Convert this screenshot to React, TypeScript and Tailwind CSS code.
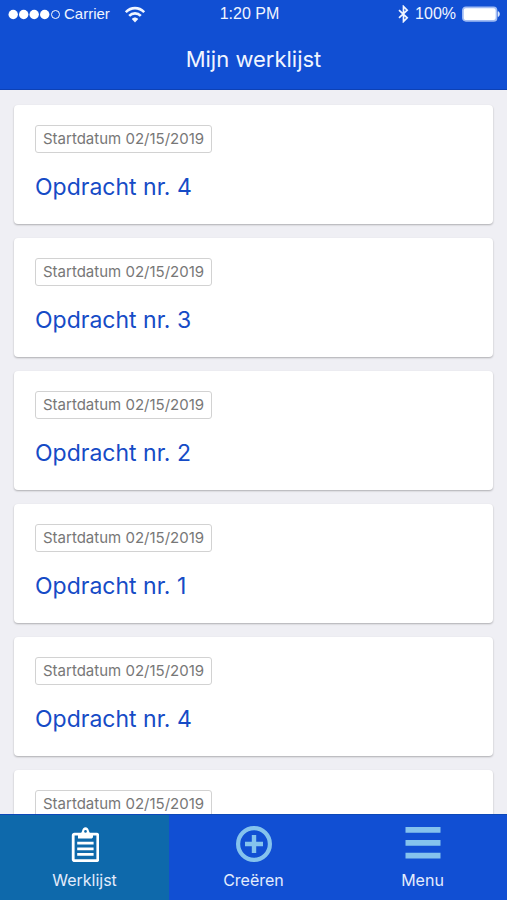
import type { ReactNode } from 'react';

type Task = { id: number; title: string; startDate: string };

const tasks: Task[] = [4, 3, 2, 1, 4, 3].map((nr, index) => ({
  id: index,
  title: `Opdracht nr. ${nr}`,
  startDate: '02/15/2019',
}));

function WifiIcon() {
  return (
    <svg className="h-[17px] w-5" viewBox="0 0 20 17" fill="none" stroke="currentColor" strokeWidth="2.6" aria-hidden="true">
      <path d="M0.8 6.200C6 0.800 14 0.800 19.200 6.200" />
      <path d="M4.200 9.800c3.200-3.200 8.400-3.200 11.600 0" />
      <path d="M6.800 13c1.900-2 4.500-2 6.400 0L10 16.400z" fill="currentColor" stroke="none" />
    </svg>
  );
}

function BluetoothIcon() {
  return (
    <svg className="h-[18px] w-[11px]" viewBox="0 0 11 18" fill="none" stroke="currentColor" strokeWidth="1.7" aria-hidden="true">
      <path d="M1 5.200l8.200 7.600-3.700 3.700V1.500l3.700 3.700L1 12.800" />
    </svg>
  );
}

function BatteryIcon() {
  return (
    <svg className="h-4 w-[38px]" viewBox="0 0 38 16" aria-hidden="true">
      <rect x="0.900" y="1.300" width="33.600" height="13.600" rx="3" fill="#fff" stroke="#a3bdf3" strokeWidth="1.700" />
      <path d="M36 5.600c2 .6 2 4.400 0 5z" fill="#dce6fc" stroke="#dce6fc" strokeWidth="0.600" />
    </svg>
  );
}

function SignalDots() {
  return (
    <svg className="h-3 w-[53px]" viewBox="0 0 53 12" fill="#fff" aria-hidden="true">
      <circle cx="5.200" cy="6.500" r="4.700" />
      <circle cx="15.700" cy="6.500" r="4.700" />
      <circle cx="26.200" cy="6.500" r="4.700" />
      <circle cx="36.700" cy="6.500" r="4.700" />
      <circle cx="47.500" cy="6.500" r="4" fill="none" stroke="#fff" />
    </svg>
  );
}

function ClipboardIcon() {
  return (
    <svg className="h-9 w-7" viewBox="0 0 28 36" fill="none" stroke="#fff" aria-hidden="true">
      <rect x="2.200" y="8.200" width="24.600" height="26.500" rx="1.200" strokeWidth="2.800" />
      <path
        d="M7 12.500V9c1.600-.6 3.300-1.600 4-3.700C11.500 2.700 12.800 1.200 14.500 1.200s3 1.500 3.500 4.100c.7 2.100 2.400 3.100 4 3.700v1.500c0 1.400-.8 2-2 2z"
        fill="#fff"
        stroke="none"
      />
      <circle cx="14.500" cy="5.400" r="1.300" fill="#0e69ab" stroke="none" />
      <path d="M6.200 17.200h16.400M6.200 22.800h16.400M6.200 28.400h16.400" strokeWidth="2.700" />
    </svg>
  );
}

function PlusCircleIcon() {
  return (
    <svg className="h-9 w-9" viewBox="0 0 36 36" fill="none" stroke="#85c3ed" aria-hidden="true">
      <circle cx="18" cy="18" r="15.900" strokeWidth="4.200" />
      <path d="M18 9v18M9 18h18" strokeWidth="4.400" />
    </svg>
  );
}

function MenuIcon() {
  return (
    <svg className="h-9 w-9" viewBox="0 0 36 36" fill="#85c3ed" aria-hidden="true">
      <path d="M0.500 1h35v5.800h-35zM0.500 14h35v5.800h-35zM0.500 26.800h35v5.800h-35z" />
    </svg>
  );
}

function StatusBar() {
  return (
    <div className="grid h-7 grid-cols-[1fr_auto_1fr] items-center px-2 font-['Liberation_Sans',Arial,sans-serif] text-base leading-7">
      <div className="flex items-center gap-[3px]">
        <SignalDots />
        <span className="mr-3 text-[15px]">Carrier</span>
        <WifiIcon />
      </div>
      <span className="pr-2">1:20 PM</span>
      <div className="-mr-px flex items-center justify-end gap-[6px]">
        <BluetoothIcon />
        <span>100%</span>
        <BatteryIcon />
      </div>
    </div>
  );
}

function TaskCard({ task }: { task: Task }) {
  return (
    <li className="shrink-0 rounded-[4px] bg-white px-[21px] py-5 shadow-[0_1px_2px_rgba(0,0,0,0.28)]">
      <div className="flex">
        <span className="rounded-[3px] border border-[#d2d2d2] px-[7px] text-[15px] leading-[26px] text-[#777]">
          Startdatum {task.startDate}
        </span>
      </div>
      <h2 className="mt-[18px] text-[23px] leading-[33px] text-[#164bc6]">{task.title}</h2>
    </li>
  );
}

function Tab({ label, icon, active = false }: { label: string; icon: ReactNode; active?: boolean }) {
  return (
    <button
      type="button"
      aria-current={active ? 'page' : undefined}
      className={`flex flex-col items-center justify-start pt-[11px] ${active ? 'bg-[#0e69ab]' : 'bg-[#114fd3]'}`}
    >
      {icon}
      <span className="mt-[7px] text-base leading-[22px] text-[#e3ecfc]">{label}</span>
    </button>
  );
}

export default function App() {
  return (
    <div className="flex h-screen flex-col overflow-hidden bg-[#efeff4] font-[Inter,'Noto_Sans',sans-serif]">
      <header className="shrink-0 border-b border-[#0d41b5] bg-[#114fd3] text-[#f0f5ff]">
        <StatusBar />
        <h1 className="pt-px text-center text-[22px] leading-[60px]">Mijn werklijst</h1>
      </header>
      <main className="min-h-0 flex-1 overflow-hidden">
        <ul className="flex flex-col gap-[14px] px-[14px] pt-[15px]">
          {tasks.map((task) => (
            <TaskCard key={task.id} task={task} />
          ))}
        </ul>
      </main>
      <nav className="grid h-[86px] shrink-0 grid-cols-3 border-t border-[#0d48b8]">
        <Tab label="Werklijst" icon={<ClipboardIcon />} active />
        <Tab label="Creëren" icon={<PlusCircleIcon />} />
        <Tab label="Menu" icon={<MenuIcon />} />
      </nav>
    </div>
  );
}
